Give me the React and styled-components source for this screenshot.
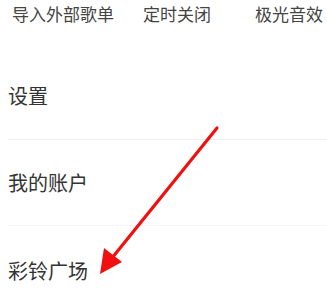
import React from 'react';
import styled, { createGlobalStyle } from 'styled-components';

const GlobalStyle = createGlobalStyle`
  html, body {
    margin: 0;
    padding: 0;
    background: #fff;
    overflow: hidden;
  }
  body {
    font-family: "Noto Sans CJK SC", "Noto Sans", sans-serif;
  }
`;

const Wrapper = styled.div`
  position: relative;
  width: 327px;
  height: 292px;
  overflow: hidden;
  background: #fff;
`;
const Toolbar = styled.div`
  display: grid;
  grid-template-columns: 131px 112px auto;
  height: 52px;
  padding-left: 12px;
  box-sizing: border-box;
`;
const ToolItem = styled.div`
  font-size: 17px;
  line-height: 28px;
  color: #444;
  white-space: nowrap;
`;
const MenuList = styled.div`
  display: flex;
  flex-direction: column;
  padding-left: 8px;
`;
const Row = styled.div`
  display: flex;
  align-items: center;
  height: ${p => p.$height}px;
  font-size: 20px;
  color: #333;
  border-bottom: 1px solid ${p => p.$line || 'transparent'};
  box-sizing: border-box;
`;
const Arrow = styled.svg`
  position: absolute;
  left: 0;
  top: 0;
  pointer-events: none;
`;

const App = () => {
  return (
    <Wrapper>
      <GlobalStyle />
      <Toolbar>
        <ToolItem>导入外部歌单</ToolItem>
        <ToolItem>定时关闭</ToolItem>
        <ToolItem>极光音效</ToolItem>
      </Toolbar>
      <MenuList>
        <Row $height={88} $line="#efefef">设置</Row>
        <Row $height={86} $line="#f6f6f6">我的账户</Row>
        <Row $height={90}>彩铃广场</Row>
      </MenuList>
      {/* red annotation arrow pointing at 彩铃广场 */}
      <Arrow width="327" height="292" viewBox="0 0 327 292">
        <line x1="217" y1="128" x2="112" y2="258" stroke="#f01010" strokeWidth="3.2" strokeLinecap="round" />
        <polygon points="100,274 122,262 104,248" fill="#f01010" />
      </Arrow>
    </Wrapper>
  );
};

export default App;
